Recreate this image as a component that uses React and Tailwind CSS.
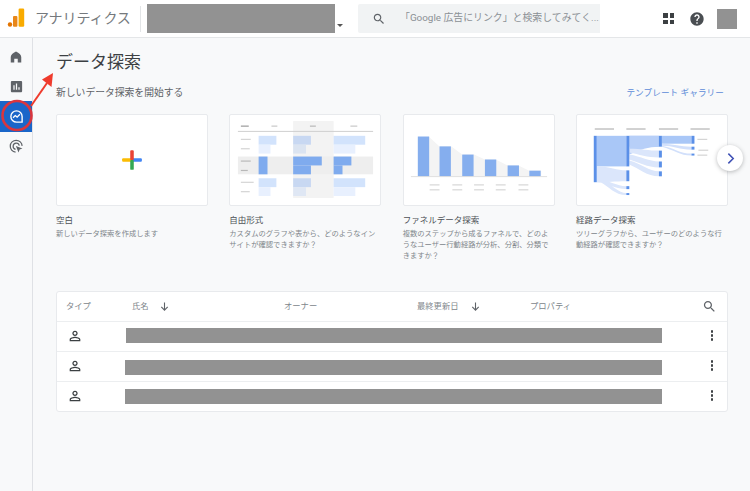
const SEARCH = "M15.5 14h-.79l-.28-.27C15.41 12.59 16 11.11 16 9.5 16 5.91 13.09 3 9.5 3S3 5.91 3 9.5 5.91 16 9.5 16c1.61 0 3.09-.59 4.23-1.57l.27.28v.79l5 4.99L20.49 19l-4.99-5zm-6 0C7.01 14 5 11.99 5 9.5S7.01 5 9.5 5 14 7.01 14 9.5 11.99 14 9.5 14z";
const PERSON = "M12 5.9c1.16 0 2.1.94 2.1 2.1s-.94 2.1-2.1 2.1S9.9 9.16 9.9 8s.94-2.1 2.1-2.1m0 9c2.97 0 6.1 1.46 6.1 2.1v1.1H5.9V17c0-.64 3.13-2.1 6.1-2.1M12 4C9.79 4 8 5.79 8 8s1.79 4 4 4 4-1.79 4-4-1.79-4-4-4zm0 9c-2.67 0-8 1.34-8 4v3h16v-3c0-2.66-5.33-4-8-4z";
const HELP = "M12 2C6.48 2 2 6.48 2 12s4.48 10 10 10 10-4.48 10-10S17.52 2 12 2zm1 17h-2v-2h2v2zm2.07-7.75l-.9.92C13.45 12.9 13 13.5 13 15h-2v-.5c0-1.1.45-2.1 1.17-2.83l1.24-1.26c.37-.36.59-.86.59-1.41 0-1.1-.9-2-2-2s-2 .9-2 2H8c0-2.21 1.79-4 4-4s4 1.79 4 4c0 .88-.36 1.68-.93 2.25z";
const POLL = "M19 3H5c-1.1 0-2 .9-2 2v14c0 1.1.9 2 2 2h14c1.1 0 2-.9 2-2V5c0-1.1-.9-2-2-2zM9 17H7v-7h2v7zm4 0h-2V7h2v10zm4 0h-2v-4h2v4z";

function Icon({ d, className }) {
  return (
    <svg viewBox="0 0 24 24" className={className} fill="currentColor">
      <path d={d} />
    </svg>
  );
}

function Logo() {
  return (
    <svg viewBox="0 0 18 20" className="w-[18px] h-[20px]">
      <circle cx="3" cy="16.5" r="2.2" fill="#e37400" />
      <rect x="6" y="8" width="4.4" height="10.7" rx="1" fill="#e8871a" />
      <rect x="11.6" y="0.5" width="5.6" height="18.2" rx="1.2" fill="#f9ab00" />
    </svg>
  );
}

function Header() {
  return (
    <header className="h-[38px] shrink-0 flex items-center bg-white border-b border-[#e4e6e8]">
      <div className="ml-[7px] w-[18px] h-[20px] mt-[-1px]"><Logo /></div>
      <span className="ml-[10px] text-[14px] tracking-[-0.1px] text-[#75797d] whitespace-nowrap w-[105px]">アナリティクス</span>
      <div className="w-px h-[26px] bg-[#e3e5e7]" />
      <div className="ml-[6px] w-[188px] h-[29px] bg-[#929292]" />
      <div className="ml-[2px] mt-[13px] w-0 h-0 border-x-[3px] border-x-transparent border-t-[3px] border-t-[#555]" />
      <div className="ml-[15px] w-[242px] h-[29px] shrink-0 bg-[#f1f3f4] rounded-l-[2px] flex items-center">
        <Icon d={SEARCH} className="ml-[14px] shrink-0 w-[14px] h-[14px] text-[#5f6368]" />
        <span className="ml-[14px] text-[9.9px] text-[#8b9095] whitespace-nowrap">「Google 広告にリンク」と検索してみてく...</span>
      </div>
      <div className="ml-[63px] grid grid-cols-2 gap-[2px] w-[11px] shrink-0">
        <span className="w-[4.5px] h-[4.5px] bg-[#3c4043]" />
        <span className="w-[4.5px] h-[4.5px] bg-[#3c4043]" />
        <span className="w-[4.5px] h-[4.5px] bg-[#3c4043]" />
        <span className="w-[4.5px] h-[4.5px] bg-[#3c4043]" />
      </div>
      <Icon d={HELP} className="ml-[15px] shrink-0 w-[16px] h-[16px] text-[#4a4e52]" />
      <div className="ml-[12px] w-[20px] h-[20px] shrink-0 bg-[#929292]" />
    </header>
  );
}

function Sidebar() {
  return (
    <aside className="w-[33px] shrink-0 border-r border-[#dfe1e5] bg-[#f8f9fa] flex flex-col items-stretch pt-[4px]">
      <div className="h-[30px] flex items-center justify-center">
        <svg viewBox="0 0 24 24" className="w-[14px] h-[14px] text-[#5f6368]" fill="currentColor">
          <path d="M12 2.5C6.5 5 3 8.5 3 12v9.5h6V15h6v6.5h6V12c0-3.500-3.500-7-9-9.500z" />
        </svg>
      </div>
      <div className="h-[28px] flex items-center justify-center">
        <Icon d={POLL} className="w-[15px] h-[15px] text-[#5f6368]" />
      </div>
      <div className="mt-[1px] h-[31px] bg-[#1a66c9] flex items-center justify-center">
        <svg viewBox="0 0 24 24" className="w-[15px] h-[15px] text-white" fill="none" stroke="currentColor" strokeWidth="2.2">
          <path d="M21 12a9 9 0 1 0-9 9h9z" />
          <path d="m6.500 14 3.500-3.500 3 2.500 4.500-4.500" />
        </svg>
      </div>
      <div className="h-[28px] flex items-center justify-center">
        <svg viewBox="0 0 24 24" className="w-[15px] h-[15px] text-[#5f6368]" fill="none" stroke="currentColor" strokeWidth="2">
          <path d="M10.500 21a9.500 9.500 0 1 1 10.500-10" />
          <path d="M10.500 16.500a5 5 0 1 1 6-6" />
          <path d="M11 11l10.500 4-4.500 1.800-1.800 4.700z" fill="currentColor" stroke="none" />
        </svg>
      </div>
    </aside>
  );
}

function BlankArt() {
  return (
    <svg viewBox="0 0 152 91" className="w-full h-full">
      <rect x="66" y="43.7" width="10" height="3.6" rx="1" fill="#fbbc04" />
      <rect x="76" y="43.7" width="10" height="3.6" rx="1" fill="#4285f4" />
      <rect x="74.2" y="35.5" width="3.6" height="10" rx="1" fill="#ea4335" />
      <rect x="74.2" y="45.5" width="3.6" height="10" rx="1" fill="#34a853" />
    </svg>
  );
}

function FreeformArt() {
  const ticks = [[11, 8, "#a8a8a8"], [42, 6, "#d0d0d0"], [81, 6, "#c0c0c0"], [122, 7, "#d0d0d0"]];
  const labels = [[24, 10, "#d4d4d4"], [33.5, 9, "#d4d4d4"], [46, 10, "#b8b8b8"], [55.5, 7, "#b8b8b8"], [67.5, 13, "#d4d4d4"], [77, 9, "#d4d4d4"]];
  const bars = [
    [29, 21, 18, 9, "#d2e3fc"], [29, 30, 12, 9, "#e8f0fe"], [29, 42, 9, 18, "#7fabee"],
    [29, 64, 18, 9, "#d2e3fc"], [29, 73, 12, 9, "#e8f0fe"],
    [64, 21, 18, 9, "#c8d8f2"], [64, 30, 13, 9, "#dbe4f1"], [64, 42, 29, 9, "#7fabee"], [64, 51, 18, 9, "#7fabee"],
    [64, 64, 18, 9, "#c8d8f2"], [64, 73, 13, 9, "#dfe7f4"],
    [105, 21, 32, 9, "#d2e3fc"], [105, 30, 22, 9, "#e8f0fe"], [105, 42, 18, 9, "#7fabee"], [105, 51, 9, 9, "#7fabee"],
    [105, 64, 32, 9, "#d2e3fc"], [105, 73, 22, 9, "#e8f0fe"],
  ];
  return (
    <svg viewBox="0 0 152 91" className="w-full h-full">
      <rect x="64" y="6" width="41" height="78" fill="#f3f3f3" />
      <rect x="8" y="42" width="137" height="18" fill="#eeeeee" />
      <rect x="8" y="16" width="137" height="1" fill="#cfcfcf" />
      {ticks.map(([x, w, c]) => <rect key={x} x={x} y="10.5" width={w} height="1.4" fill={c} />)}
      {labels.map(([y, w, c]) => <rect key={y} x="11" y={y} width={w} height="1.2" fill={c} />)}
      {bars.map(([x, y, w, h, c]) => <rect key={`${x}-${y}`} x={x} y={y} width={w} height={h} fill={c} />)}
    </svg>
  );
}

function FunnelArt() {
  const bars = [[14, 21.7], [36, 31.7], [59, 40], [82, 45], [105, 51], [127, 56.3]];
  const labels = [26, 49, 71, 93, 116];
  return (
    <svg viewBox="0 0 152 91" className="w-full h-full">
      <path d="M25 21.7 36 31.7H48L59 40H71L82 45H93L105 51H116L127 56.3H139V62H25z" fill="#f4f4f4" />
      {bars.map(([x, y]) => <rect key={x} x={x} y={y} width="11.5" height={62 - y} fill="#85aeee" />)}
      <rect x="7" y="62" width="138" height="0.8" fill="#d9d9d9" />
      {labels.map((x) => (
        <g key={x} fill="#dcdcdc">
          <rect x={x} y="70" width="10" height="1.4" />
          <rect x={x} y="75" width="10" height="1.4" />
        </g>
      ))}
    </svg>
  );
}

function PathArt() {
  const col2 = [[21, 31], [56, 11], [72, 3], [79, 2]];
  const col3 = [[21, 11], [36, 7], [47, 6], [57, 5]];
  const col4 = [[21, 8], [32, 3], [39, 2]];
  return (
    <svg viewBox="0 0 152 91" className="w-full h-full">
      {[18, 50, 83, 115].map((x) => <rect key={x} x={x} y="13.3" width="19.5" height="1.6" fill="#c6c6c6" />)}
      <rect x="20" y="21" width="30" height="31" fill="#a9c7f7" />
      <path d="M20 52c14 0 20 4 30 4v11C38 67 32 68 20 68z" fill="#dbe6fb" />
      <path d="M20 66c14 0 20 6 30 6v3C38 75 30 68 20 68zM26 68c10 2 16 11 24 11v2C38 81 32 72 24 68z" fill="#dbe6fb" />
      <rect x="53" y="21" width="30" height="11" fill="#a9c7f7" />
      <path d="M53 21h30v11c-10 0-20 3-30 8z" fill="#b7cff8" />
      <path d="M53 34c12 0 20 2 30 2v7c-12 0-20-3-30-5zM53 40c12 2 20 7 30 7v6c-12 0-20-5-30-8zM53 46c12 3 20 11 30 11v5C71 62 63 54 53 50z" fill="#dbe6fb" />
      <rect x="86" y="21" width="30" height="8" fill="#a9c7f7" />
      <path d="M86 29c12 0 18 3 30 3v3C104 35 98 31 86 31zM86 31c12 2 18 8 30 8v2C104 41 98 35 86 32z" fill="#d2e0fb" />
      {col2.map(([y, h]) => <rect key={y} x="50" y={y} width="3" height={h} fill="#5b90e8" />)}
      {col3.map(([y, h]) => <rect key={y} x="83" y={y} width="3" height={h} fill="#5b90e8" />)}
      {col4.map(([y, h]) => <rect key={y} x="116" y={y} width="3" height={h} fill="#5b90e8" />)}
      <rect x="17" y="21" width="3" height="47" fill="#5b90e8" />
      <rect x="122" y="24" width="10" height="1.2" fill="#d4d4d4" />
      <rect x="123" y="35" width="10" height="1.2" fill="#d4d4d4" />
      <rect x="122" y="40" width="10" height="1.2" fill="#d4d4d4" />
    </svg>
  );
}

const templates = [
  { title: "空白", desc: "新しいデータ探索を作成します", Art: BlankArt },
  { title: "自由形式", desc: "カスタムのグラフや表から、どのようなインサイトが確認できますか？", Art: FreeformArt },
  { title: "ファネルデータ探索", desc: "複数のステップから成るファネルで、どのようなユーザー行動経路が分析、分割、分類できますか？", Art: FunnelArt },
  { title: "経路データ探索", desc: "ツリーグラフから、ユーザーのどのような行動経路が確認できますか？", Art: PathArt },
];

function TemplateCard({ title, desc, Art }) {
  return (
    <div>
      <div className="h-[92px] bg-white border border-[#e8eaed] rounded-[2px] overflow-hidden">
        <Art />
      </div>
      <h3 className="mt-[8px] text-[8.5px] leading-[12px] text-[#4d5156]">{title}</h3>
      <p className="mt-[2px] text-[7.3px] leading-[11px] text-[#80868b]">{desc}</p>
    </div>
  );
}

function SortArrow({ className }) {
  return (
    <svg viewBox="0 0 12 12" className={className} fill="none" stroke="#5f6368" strokeWidth="1.2">
      <path d="M6 1.500v8.500M2.500 6.500 6 10l3.500-3.500" />
    </svg>
  );
}

function Kebab() {
  return (
    <div className="w-[16px] flex flex-col items-center gap-[1.5px]">
      <span className="w-[2.5px] h-[2.5px] rounded-full bg-[#3c4043]" />
      <span className="w-[2.5px] h-[2.5px] rounded-full bg-[#3c4043]" />
      <span className="w-[2.5px] h-[2.5px] rounded-full bg-[#3c4043]" />
    </div>
  );
}

function FileTable() {
  const rows = [
    { id: 1, bar: "ml-[43px] w-[536px] -mt-[2px]" },
    { id: 2, bar: "ml-[42px] w-[537px] mt-[1px]" },
    { id: 3, bar: "ml-[42px] w-[537px] mt-[0px]" },
  ];
  return (
    <div className="mt-[30px] w-[672px] bg-white border border-[#e8eaed] rounded-[3px]">
      <div className="h-[29px] grid grid-cols-[66px_152px_133px_113px_1fr] items-center pl-[9px] text-[8.3px] text-[#80868b]">
        <span>タイプ</span>
        <span className="flex items-center">氏名<SortArrow className="ml-[10px] w-[11px] h-[11px]" /></span>
        <span>オーナー</span>
        <span className="flex items-center">最終更新日<SortArrow className="ml-[11px] w-[11px] h-[11px]" /></span>
        <span className="flex items-center justify-between pr-[10px]">
          プロパティ
          <Icon d={SEARCH} className="w-[15px] h-[15px] text-[#5f6368]" />
        </span>
      </div>
      {rows.map((row) => (
        <div key={row.id} className="h-[30px] border-t border-[#eceef0] flex items-center pl-[10px]">
          <Icon d={PERSON} className="w-[16px] h-[16px] -mt-[2px] text-[#3c4043]" />
          <div className={`h-[15px] bg-[#929292] ${row.bar}`} />
          <div className="ml-[42px] -mt-[2px]"><Kebab /></div>
        </div>
      ))}
    </div>
  );
}

export default function App() {
  return (
    <div className="relative w-[750px] h-[491px] overflow-hidden flex flex-col bg-[#f8f9fa] font-['Roboto','Noto_Sans_CJK_JP',sans-serif]">
      <Header />
      <div className="flex flex-1 min-h-0">
        <Sidebar />
        <main className="flex-1 pl-[23px]">
          <h1 className="mt-[12px] text-[17px] leading-[24px] text-[#3c4043]">データ探索</h1>
          <div className="mt-[12px] w-[668px] h-[14px] flex items-center justify-between">
            <span className="text-[9.8px] text-[#5f6368]">新しいデータ探索を開始する</span>
            <a className="text-[8.6px] tracking-[0.1px] text-[#5c8bd8]">テンプレート ギャラリー</a>
          </div>
          <div className="mt-[14px] w-[672px] grid grid-cols-4 gap-x-[21.33px]">
            {templates.map((t) => <TemplateCard key={t.title} {...t} />)}
          </div>
          <FileTable />
        </main>
      </div>

      {/* carousel next button */}
      <button className="absolute left-[717px] top-[145px] w-[26px] h-[26px] rounded-full bg-white shadow-[0_1px_4px_rgba(60,64,67,0.35)] flex items-center justify-center">
        <svg viewBox="0 0 12 12" className="w-[13px] h-[13px]" fill="none" stroke="#3f51b5" strokeWidth="1.4">
          <path d="M4 1.500 8.500 6 4 10.500" />
        </svg>
      </button>

      {/* red annotation on the screenshot */}
      <svg className="absolute left-0 top-0 w-[750px] h-[491px] pointer-events-none" viewBox="0 0 750 491" fill="none">
        <circle cx="17" cy="115.5" r="14.500" stroke="#d9363e" strokeWidth="2.600" />
        <path d="M31 106 47 83" stroke="#ef3b2d" strokeWidth="2" />
        <path d="M53 73 42 79.500 51.500 87z" fill="#ef3b2d" />
      </svg>
    </div>
  );
}
